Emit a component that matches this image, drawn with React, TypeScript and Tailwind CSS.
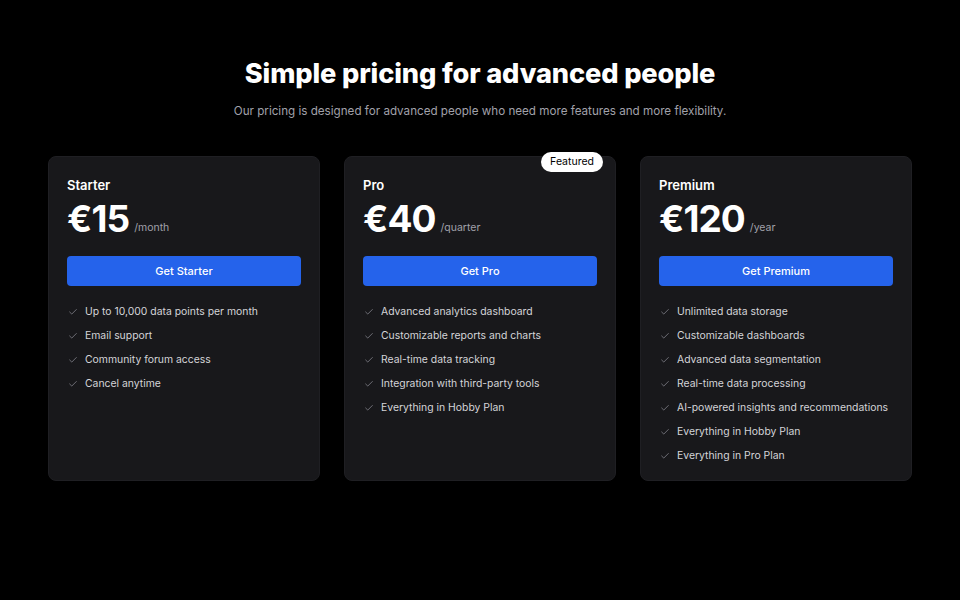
import { Check } from 'lucide-react';

interface Plan {
  name: string;
  price: string;
  period: string;
  cta: string;
  featured?: boolean;
  features: string[];
}

const plans: Plan[] = [
  {
    name: 'Starter',
    price: '€15',
    period: '/month',
    cta: 'Get Starter',
    features: [
      'Up to 10,000 data points per month',
      'Email support',
      'Community forum access',
      'Cancel anytime',
    ],
  },
  {
    name: 'Pro',
    price: '€40',
    period: '/quarter',
    cta: 'Get Pro',
    featured: true,
    features: [
      'Advanced analytics dashboard',
      'Customizable reports and charts',
      'Real-time data tracking',
      'Integration with third-party tools',
      'Everything in Hobby Plan',
    ],
  },
  {
    name: 'Premium',
    price: '€120',
    period: '/year',
    cta: 'Get Premium',
    features: [
      'Unlimited data storage',
      'Customizable dashboards',
      'Advanced data segmentation',
      'Real-time data processing',
      'AI-powered insights and recommendations',
      'Everything in Hobby Plan',
      'Everything in Pro Plan',
    ],
  },
];

function PlanCard({ plan }: { plan: Plan }) {
  return (
    <article className="relative h-[325px] rounded-lg border border-[#1f1f23] bg-[#18181b] px-[18px] pt-[20px]">
      {plan.featured ? (
        <span className="absolute -top-[5px] right-[12px] rounded-full bg-white px-[9px] py-[3px] text-[10.5px] leading-[14px] text-black">
          Featured
        </span>
      ) : null}
      <h3 className="text-[13px] font-semibold leading-4 text-white">{plan.name}</h3>
      <div className="mt-[6px] flex items-end gap-[5px]">
        <span className="text-[37px] font-bold leading-[40px] tracking-[-0.025em] text-white">
          {plan.price}
        </span>
        <span className="mb-[5px] text-[10.5px] leading-3 text-[#a1a1aa]">{plan.period}</span>
      </div>
      <button
        type="button"
        className="mt-[17px] flex h-[30px] w-full items-center justify-center rounded-[4px] bg-[#2563eb] text-[11px] font-medium text-white"
      >
        {plan.cta}
      </button>
      <ul className="mt-[19px] flex flex-col gap-[10px]">
        {plan.features.map((f) => (
          <li
            key={f}
            className="flex items-center gap-[7px] whitespace-nowrap text-[10.4px] leading-[14px] text-[#d4d4d8]"
          >
            <Check size={10} strokeWidth={1.5} className="ml-[1px] text-[#a1a1aa]" />
            {f}
          </li>
        ))}
      </ul>
    </article>
  );
}

export default function App() {
  return (
    <main
      className="min-h-[600px] w-full bg-black pt-[58px]"
      style={{ fontFamily: 'Inter, "Noto Sans", sans-serif' }}
    >
      <div className="text-center">
        <h1 className="text-[27.2px] font-extrabold leading-8 tracking-[-0.005em] text-white">
          Simple pricing for advanced people
        </h1>
        <p className="mt-[13px] text-[11.65px] leading-4 text-[#a1a1aa]">
          Our pricing is designed for advanced people who need more features and more flexibility.
        </p>
      </div>
      <div className="mx-auto mt-[37px] grid w-[864px] grid-cols-3 gap-[24px]">
        {plans.map((p) => (
          <PlanCard key={p.name} plan={p} />
        ))}
      </div>
    </main>
  );
}
